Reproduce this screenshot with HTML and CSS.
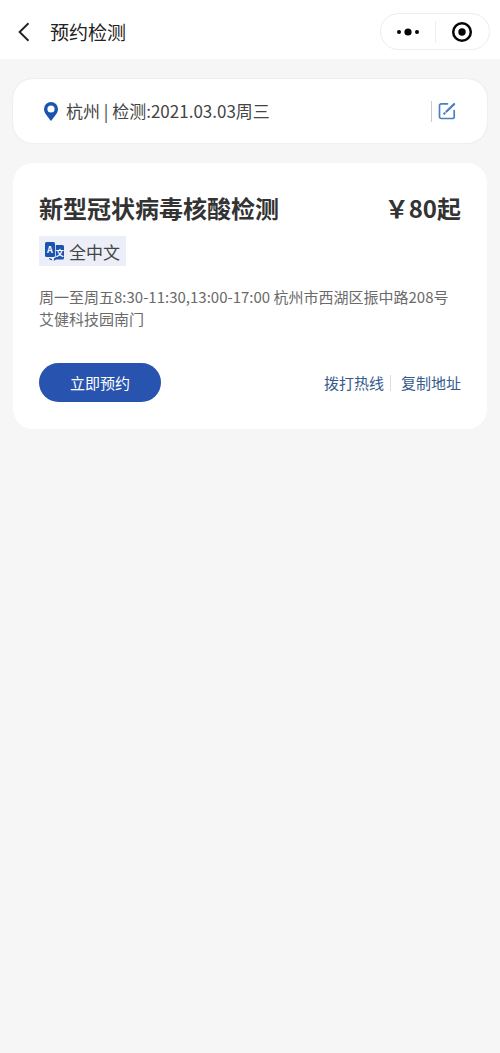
FILE: index.html
```html
<!DOCTYPE html>
<html lang="zh-CN">
<head>
<meta charset="utf-8">
<meta name="viewport" content="width=device-width, initial-scale=1">
<title>预约检测</title>
<link rel="stylesheet" href="styles.css">
</head>
<body>
<header class="navbar">
  <button class="icon-button back" type="button" aria-label="返回">
    <svg width="12" height="20" viewBox="0 0 12 20" fill="none" stroke="#222" stroke-width="1.9"><path d="M10.500 1.200 1.600 10l8.900 8.800"/></svg>
  </button>
  <h1 class="navbar-title">预约检测</h1>
  <div class="capsule">
    <button class="icon-button capsule-part" type="button" aria-label="更多">
      <svg width="24" height="10" viewBox="0 0 24 10" fill="#050505"><circle cx="3" cy="5" r="2"/><circle cx="12" cy="5" r="3.600"/><circle cx="21" cy="5" r="2"/></svg>
    </button>
    <button class="icon-button capsule-part" type="button" aria-label="关闭">
      <svg width="22" height="22" viewBox="0 0 22 22"><circle cx="11" cy="11" r="8.800" fill="none" stroke="#050505" stroke-width="2.500"/><circle cx="11" cy="11" r="3.700" fill="#050505"/></svg>
    </button>
  </div>
</header>
<main class="content">
  <section class="card location">
    <svg class="pin" width="14" height="19" viewBox="0 0 14 19"><path fill="#1b54ae" fill-rule="evenodd" d="M7 0a7 7 0 0 0-7 7c0 3.900 3.700 7.700 7 12 3.300-4.300 7-8.100 7-12a7 7 0 0 0-7-7Zm0 3.400a3.600 3.600 0 1 1 0 7.200 3.600 3.600 0 0 1 0-7.200Z"/></svg>
    <span class="location-text">杭州 | 检测:2021.03.03周三</span>
    <button class="icon-button edit" type="button" aria-label="修改">
      <svg width="18" height="18" viewBox="0 0 18 18" fill="none" stroke="#4a80c0" stroke-width="1.700" stroke-linecap="round" stroke-linejoin="round"><path d="M9.500 1.800H3.200A1.700 1.700 0 0 0 1.500 3.500v11.300a1.700 1.700 0 0 0 1.700 1.700h11.300a1.700 1.700 0 0 0 1.700-1.700V8.500"/><path d="m8.500 9.500 7.600-7.400" stroke-width="2.200"/><path d="m6.300 11.600.4-.4" stroke-width="2.200"/></svg>
    </button>
  </section>
  <section class="card service">
    <div class="service-head">
      <h2 class="service-title">新型冠状病毒核酸检测</h2>
      <span class="price">￥80起</span>
    </div>
    <div class="tag">
      <svg width="19" height="19" viewBox="0 0 19 19" aria-hidden="true"><rect x="0" y="0" width="10" height="15" rx="1.500" fill="#1b54ae"/><path fill="#1b54ae" d="M10.800 3h6.700A1.500 1.500 0 0 1 19 4.500V16a1.500 1.500 0 0 1-1.500 1.500H11L8.800 19l.4-3h.3a1.300 1.300 0 0 0 1.300-1.300Z"/><path d="M4.500 16.200c.2 1 .8 1.400 2.500 1.400" fill="none" stroke="#1b54ae" stroke-width="1.200"/><text class="glyph" x="5" y="10.500" font-size="9">A</text><text class="glyph" x="14.800" y="13.500" font-size="8">文</text></svg>
      <span>全中文</span>
    </div>
    <p class="details">周一至周五8:30-11:30,13:00-17:00 杭州市西湖区振中路208号艾健科技园南门</p>
    <div class="actions">
      <button class="book" type="button">立即预约</button>
      <div class="links">
        <a class="link" href="#call">拨打热线</a>
        <a class="link" href="#copy">复制地址</a>
      </div>
    </div>
  </section>
</main>
</body>
</html>
```
FILE: styles.css
```css
* {
  box-sizing: border-box;
}

body {
  margin: 0;
  min-height: 100vh;
  background: #f6f6f6;
  color: #444;
  font-family: "Noto Sans CJK SC", sans-serif;
  font-size: 17px;
}

h1,
h2,
p {
  margin: 0;
}

button {
  font: inherit;
  border: 0;
  cursor: pointer;
}

.icon-button {
  display: flex;
  align-items: center;
  justify-content: center;
  padding: 0;
  background: none;
}

.navbar {
  display: flex;
  align-items: center;
  padding: 13px 10px 9px 18px;
  background: #fff;
}

.navbar-title {
  margin-left: 20px;
  color: #222;
  font-size: 19px;
  font-weight: 400;
  line-height: 28px;
}

.capsule {
  display: flex;
  width: 110px;
  height: 37px;
  margin-left: auto;
  border: 1px solid #ededed;
  border-radius: 19px;
}

.capsule-part {
  flex: 1;
}

.capsule-part + .capsule-part {
  position: relative;
}

.capsule-part + .capsule-part::before {
  content: "";
  position: absolute;
  left: 0;
  width: 1px;
  height: 22px;
  background: #eee;
}

.content {
  display: flex;
  flex-direction: column;
  gap: 20px;
  padding: 20px 13px;
}

.card {
  background: #fff;
  border-radius: 20px;
}

.location {
  display: flex;
  align-items: center;
  padding: 20px 31px;
  box-shadow: 0 0 2px #ddd;
}

.location-text {
  margin-left: 8px;
  line-height: 24px;
}

.edit {
  margin-left: auto;
  height: 21px;
  padding-left: 6px;
  border-left: 1px solid #ccc;
}

.service {
  padding: 28px 26px 27px;
}

.service-head {
  display: flex;
  align-items: center;
  justify-content: space-between;
  color: #333;
  font-size: 24px;
  font-weight: 700;
  line-height: 34px;
}

.service-title {
  font-size: inherit;
  font-weight: inherit;
}

.tag {
  display: inline-flex;
  align-items: center;
  gap: 5px;
  height: 30px;
  margin-top: 11px;
  padding: 0 6px;
  background: #eceef8;
}

.glyph {
  fill: #fff;
  font-weight: 700;
  text-anchor: middle;
}

.details {
  margin-top: 20px;
  color: #6a6a6a;
  font-size: 15px;
  line-height: 22px;
}

.actions {
  display: flex;
  align-items: center;
  justify-content: space-between;
  margin-top: 33px;
}

.book {
  width: 122px;
  height: 39px;
  border-radius: 20px;
  background: #2853ae;
  color: #fff;
  font-size: 15px;
}

.links {
  display: flex;
}

.link {
  color: #365a8c;
  font-size: 15px;
  line-height: 16px;
  text-decoration: none;
}

.link + .link {
  margin-left: 6px;
  padding-left: 10px;
  border-left: 1px solid #ddd;
}
```
